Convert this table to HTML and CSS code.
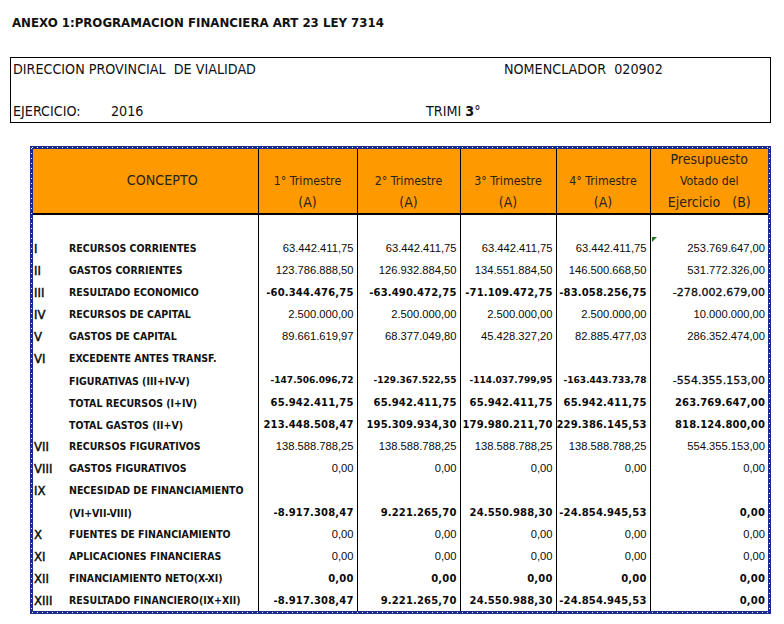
FILE: index.html
```html
<!DOCTYPE html>
<html lang="es">
<head>
<meta charset="utf-8">
<title>Anexo 1</title>
<link rel="stylesheet" href="styles.css">
</head>
<body>
<h1 class="title">ANEXO 1:PROGRAMACION FINANCIERA ART 23 LEY 7314</h1>

<div class="info">
  <div class="info-row">
    <span class="info-a">DIRECCION PROVINCIAL&nbsp; DE VIALIDAD</span>
    <span class="info-c">NOMENCLADOR&nbsp; 020902</span>
  </div>
  <div class="info-row">
    <span class="info-a1">EJERCICIO:</span>
    <span class="info-a2">2016</span>
    <span class="info-b">TRIMI <b>3</b>°</span>
  </div>
</div>

<div class="frame">
<table class="grid">
  <colgroup>
    <col class="c-concept">
    <col class="c-q1">
    <col class="c-q2">
    <col class="c-q3">
    <col class="c-q4">
    <col class="c-pres">
  </colgroup>
  <thead>
    <tr class="head">
      <th class="h-concept">CONCEPTO</th>
      <th><span class="h-gap"></span><span class="h-sm">1° Trimestre</span><span class="h-lg">(A)</span></th>
      <th><span class="h-gap"></span><span class="h-sm">2° Trimestre</span><span class="h-lg">(A)</span></th>
      <th><span class="h-gap"></span><span class="h-sm">3° Trimestre</span><span class="h-lg">(A)</span></th>
      <th><span class="h-gap"></span><span class="h-sm">4° Trimestre</span><span class="h-lg">(A)</span></th>
      <th><span class="h-lg">Presupuesto</span><span class="h-sm">Votado del</span><span class="h-lg">Ejercicio&nbsp;&nbsp; (B)</span></th>
    </tr>
  </thead>
  <tbody>
    <tr class="spacer"><td></td><td></td><td></td><td></td><td></td><td></td></tr>
    <tr><td><span class="rn">I</span><span class="lbl">RECURSOS CORRIENTES</span></td><td>63.442.411,75</td><td>63.442.411,75</td><td>63.442.411,75</td><td>63.442.411,75</td><td class="mark">253.769.647,00<i class="tri"></i></td></tr>
    <tr><td><span class="rn">II</span><span class="lbl">GASTOS CORRIENTES</span></td><td>123.786.888,50</td><td>126.932.884,50</td><td>134.551.884,50</td><td>146.500.668,50</td><td>531.772.326,00</td></tr>
    <tr class="bold"><td><span class="rn">III</span><span class="lbl">RESULTADO ECONOMICO</span></td><td>-60.344.476,75</td><td>-63.490.472,75</td><td>-71.109.472,75</td><td>-83.058.256,75</td><td class="med">-278.002.679,00</td></tr>
    <tr><td><span class="rn">IV</span><span class="lbl">RECURSOS DE CAPITAL</span></td><td>2.500.000,00</td><td>2.500.000,00</td><td>2.500.000,00</td><td>2.500.000,00</td><td>10.000.000,00</td></tr>
    <tr><td><span class="rn">V</span><span class="lbl">GASTOS DE CAPITAL</span></td><td>89.661.619,97</td><td>68.377.049,80</td><td>45.428.327,20</td><td>82.885.477,03</td><td>286.352.474,00</td></tr>
    <tr><td><span class="rn">VI</span><span class="lbl">EXCEDENTE ANTES TRANSF.</span></td><td></td><td></td><td></td><td></td><td></td></tr>
    <tr class="small"><td><span class="rn"></span><span class="lbl">FIGURATIVAS (III+IV-V)</span></td><td>-147.506.096,72</td><td>-129.367.522,55</td><td>-114.037.799,95</td><td>-163.443.733,78</td><td class="med">-554.355.153,00</td></tr>
    <tr class="bold"><td><span class="rn"></span><span class="lbl">TOTAL RECURSOS (I+IV)</span></td><td>65.942.411,75</td><td>65.942.411,75</td><td>65.942.411,75</td><td>65.942.411,75</td><td>263.769.647,00</td></tr>
    <tr class="bold"><td><span class="rn"></span><span class="lbl">TOTAL GASTOS (II+V)</span></td><td>213.448.508,47</td><td>195.309.934,30</td><td>179.980.211,70</td><td>229.386.145,53</td><td>818.124.800,00</td></tr>
    <tr><td><span class="rn">VII</span><span class="lbl">RECURSOS FIGURATIVOS</span></td><td>138.588.788,25</td><td>138.588.788,25</td><td>138.588.788,25</td><td>138.588.788,25</td><td>554.355.153,00</td></tr>
    <tr><td><span class="rn">VIII</span><span class="lbl">GASTOS FIGURATIVOS</span></td><td>0,00</td><td>0,00</td><td>0,00</td><td>0,00</td><td>0,00</td></tr>
    <tr><td><span class="rn">IX</span><span class="lbl">NECESIDAD DE FINANCIAMIENTO</span></td><td></td><td></td><td></td><td></td><td></td></tr>
    <tr class="bold"><td><span class="rn"></span><span class="lbl">(VI+VII-VIII)</span></td><td>-8.917.308,47</td><td>9.221.265,70</td><td>24.550.988,30</td><td>-24.854.945,53</td><td>0,00</td></tr>
    <tr><td><span class="rn">X</span><span class="lbl">FUENTES DE FINANCIAMIENTO</span></td><td>0,00</td><td>0,00</td><td>0,00</td><td>0,00</td><td>0,00</td></tr>
    <tr><td><span class="rn">XI</span><span class="lbl">APLICACIONES FINANCIERAS</span></td><td>0,00</td><td>0,00</td><td>0,00</td><td>0,00</td><td>0,00</td></tr>
    <tr class="bold"><td><span class="rn">XII</span><span class="lbl">FINANCIAMIENTO NETO(X-XI)</span></td><td>0,00</td><td>0,00</td><td>0,00</td><td>0,00</td><td>0,00</td></tr>
    <tr class="bold"><td><span class="rn">XIII</span><span class="lbl">RESULTADO FINANCIERO(IX+XII)</span></td><td>-8.917.308,47</td><td>9.221.265,70</td><td>24.550.988,30</td><td>-24.854.945,53</td><td>0,00</td></tr>
  </tbody>
</table>
</div>
</body>
</html>
```

FILE: styles.css
```css
* { box-sizing: border-box; }

html, body {
  margin: 0;
  padding: 0;
  background: #fff;
  color: #000;
}

body {
  width: 784px;
  height: 624px;
  overflow: hidden;
  font-family: "DejaVu Sans Condensed", "DejaVu Sans", sans-serif;
  font-stretch: condensed;
}

.title {
  margin: 0;
  padding: 15px 0 0 12px;
  height: 30px;
  font-size: 13.1px;
  line-height: 15px;
  font-weight: bold;
  color: #111;
}

.info {
  margin: 27px 0 0 10px;
  width: 761px;
  height: 66px;
  border: 1px solid #000;
  padding: 3px 2px 3px 2px;
  display: flex;
  flex-direction: column;
  justify-content: space-between;
  font-size: 14.2px;
  line-height: 16px;
  color: #111;
}

.info-row {
  display: flex;
  white-space: pre;
}

.info-a { width: 491px; }
.info-a1 { width: 98px; }
.info-a2 { width: 315px; }
.info-b b { font-weight: bold; }

.frame {
  margin: 23px 0 0 30px;
  width: 741px;
  padding: 3px;
  background:
    repeating-linear-gradient(90deg, #fff 0 1px, transparent 1px 5px) left 2px top 1px / calc(100% - 4px) 1px no-repeat,
    repeating-linear-gradient(90deg, #fff 0 1px, transparent 1px 5px) left 2px bottom 1px / calc(100% - 4px) 1px no-repeat,
    repeating-linear-gradient(180deg, #fff 0 1px, transparent 1px 5px) left 1px top 2px / 1px calc(100% - 4px) no-repeat,
    repeating-linear-gradient(180deg, #fff 0 1px, transparent 1px 5px) right 1px top 2px / 1px calc(100% - 4px) no-repeat,
    #1b2a8f;
}

.grid {
  width: 735px;
  border-collapse: collapse;
  table-layout: fixed;
  background: #fff;
}

.c-concept { width: 225px; }
.c-q1 { width: 99px; }
.c-q2 { width: 103px; }
.c-q3 { width: 96px; }
.c-q4 { width: 94px; }
.c-pres { width: 118px; }

.head th {
  height: 65px;
  background: #ff9900;
  color: #2b2218;
  font-weight: normal;
  text-align: center;
  vertical-align: top;
  border-left: 1px solid #000;
  border-bottom: 2px solid #000;
  padding: 0;
}

.head th:first-child { border-left: none; }

.head th span { display: block; }

.head th.h-concept {
  vertical-align: middle;
  font-size: 14.2px;
  padding: 0 0 2px 34px;
}

.h-gap { height: 21px; }

.h-sm {
  font-size: 12.3px;
  line-height: 22px;
}

.h-lg {
  font-size: 14px;
  line-height: 21px;
}

tbody td {
  height: 22px;
  padding: 0 3px 0 0;
  border-left: 1px solid #000;
  text-align: right;
  vertical-align: middle;
  white-space: nowrap;
  font-family: "Liberation Sans", Arial, sans-serif;
  font-stretch: normal;
  font-size: 11.2px;
  color: #0a0a0a;
}

tbody tr.spacer td { height: 23px; }

tbody td:first-child {
  border-left: none;
  text-align: left;
  padding: 0 0 0 1px;
  font-family: "DejaVu Sans Condensed", "DejaVu Sans", sans-serif;
  font-stretch: condensed;
}

.rn {
  display: inline-block;
  width: 35px;
  font-size: 13px;
  vertical-align: middle;
  -webkit-text-stroke: 0.4px #000;
}

.lbl {
  display: inline-block;
  font-size: 10.5px;
  font-weight: bold;
  vertical-align: middle;
  color: #111;
}

tr.bold td:not(:first-child) {
  font-family: "DejaVu Sans", sans-serif;
  font-weight: bold;
  font-size: 10px;
  letter-spacing: 0.15px;
}

tr.small td:not(:first-child) {
  font-family: "DejaVu Sans", sans-serif;
  font-weight: bold;
  font-size: 9px;
}

tbody td.med,
tr.bold td.med,
tr.small td.med {
  font-family: "DejaVu Sans", sans-serif;
  font-weight: normal;
  font-size: 11px;
  letter-spacing: 0.05px;
  -webkit-text-stroke: 0.3px #111;
}

td.mark { position: relative; }

.tri {
  position: absolute;
  left: 1px;
  top: 0;
  width: 0;
  height: 0;
  border-top: 5px solid #1e7a1e;
  border-right: 5px solid transparent;
}
```
